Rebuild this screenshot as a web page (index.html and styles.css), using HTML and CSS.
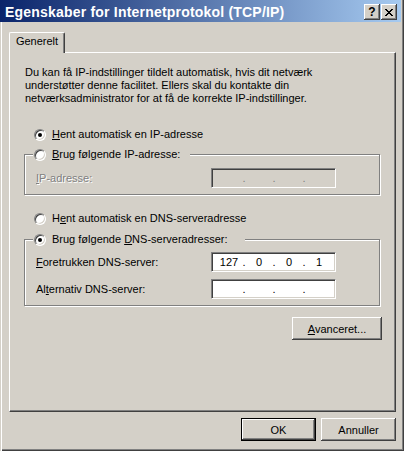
FILE: index.html
```html
<!DOCTYPE html>
<html lang="da">

<head>
    <meta charset="UTF-8">
    <title>Egenskaber for Internetprotokol (TCP/IP)</title>
    <link rel="stylesheet" href="styles.css">
</head>

<body>
    <div class="window">
        <div class="titlebar">
            <span class="title">Egenskaber for Internetprotokol (TCP/IP)</span>
            <div class="caption-buttons">
                <button class="cap-btn cap-help">?</button>
                <button class="cap-btn cap-close">
                    <svg width="8" height="7" viewBox="0 0 8 7">
                        <path d="M0 0h2v1h-2zM6 0h2v1h-2zM1 1h2v1h-2zM5 1h2v1h-2zM2 2h4v1h-4zM3 3h2v1h-2zM2 4h4v1h-4zM1 5h2v1h-2zM5 5h2v1h-2zM0 6h2v1h-2zM6 6h2v1h-2z" fill="#000" />
                    </svg>
                </button>
            </div>
        </div>

        <div class="body">
            <div class="tabs">
                <div class="tab">Generelt</div>
            </div>

            <div class="panel">
                <p class="intro">Du kan få IP-indstillinger tildelt automatisk, hvis dit netværk
                    understøtter denne facilitet. Ellers skal du kontakte din
                    netværksadministrator for at få de korrekte IP-indstillinger.</p>

                <div class="radio-row row-ip-auto">
                    <span class="radio checked"></span>
                    <span><u>H</u>ent automatisk en IP-adresse</span>
                </div>

                <fieldset class="group group-ip">
                    <legend class="group-caption caption-ip">
                        <span class="radio"></span>
                        <span><u>B</u>rug følgende IP-adresse:</span>
                    </legend>
                    <div class="field-row">
                        <span class="label disabled"><u>I</u>P-adresse:</span>
                        <div class="ipfield ipfield-disabled">
                            <span class="seg"></span><span class="dot">.</span>
                            <span class="seg"></span><span class="dot">.</span>
                            <span class="seg"></span><span class="dot">.</span>
                            <span class="seg"></span>
                        </div>
                    </div>
                </fieldset>

                <div class="radio-row row-dns-auto">
                    <span class="radio"></span>
                    <span>H<u>e</u>nt automatisk en DNS-serveradresse</span>
                </div>

                <fieldset class="group group-dns">
                    <legend class="group-caption caption-dns">
                        <span class="radio checked"></span>
                        <span>Brug følgende <u>D</u>NS-serveradresser:</span>
                    </legend>
                    <div class="field-row">
                        <span class="label"><u>F</u>oretrukken DNS-server:</span>
                        <div class="ipfield">
                            <span class="seg">127</span><span class="dot">.</span>
                            <span class="seg">0</span><span class="dot">.</span>
                            <span class="seg">0</span><span class="dot">.</span>
                            <span class="seg">1</span>
                        </div>
                    </div>
                    <div class="field-row">
                        <span class="label">Al<u>t</u>ernativ DNS-server:</span>
                        <div class="ipfield">
                            <span class="seg"></span><span class="dot">.</span>
                            <span class="seg"></span><span class="dot">.</span>
                            <span class="seg"></span><span class="dot">.</span>
                            <span class="seg"></span>
                        </div>
                    </div>
                </fieldset>

                <div class="advanced-row">
                    <button class="btn btn-advanced"><u>A</u>vanceret...</button>
                </div>
            </div>

            <div class="actions">
                <button class="btn btn-default">OK</button>
                <button class="btn">Annuller</button>
            </div>
        </div>
    </div>
</body>

</html>
```

FILE: styles.css
```css
* {
    margin: 0;
    padding: 0;
    box-sizing: border-box;
}

body {
    font-family: 'Liberation Sans', Arial, sans-serif;
    font-size: 11px;
    color: #000;
    background: #D4D0C8;
}

u {
    text-decoration: underline;
    text-underline-offset: 1px;
}

.window {
    width: 404px;
    height: 451px;
    background-color: #D4D0C8;
    box-shadow: inset 1px 0 #D4D0C8, inset 2px 0 #FFFFFF, inset -1px -1px #404040, inset -2px -2px #808080;
}

/* title bar */

.titlebar {
    height: 22px;
    margin-right: 3px;
    background: linear-gradient(to right, #0A246A, #A6CAF0);
    display: flex;
    align-items: center;
    justify-content: space-between;
}

.title {
    color: #FFFFFF;
    font-weight: bold;
    font-size: 14px;
    letter-spacing: 0.2px;
    line-height: 16px;
    padding-left: 5px;
    margin-top: 2px;
    white-space: nowrap;
}

.caption-buttons {
    display: flex;
    gap: 1px;
    margin-right: 4px;
    margin-top: 2px;
}

.cap-btn {
    width: 16px;
    height: 16px;
    border: none;
    background-color: #D4D0C8;
    box-shadow: inset -1px -1px #404040, inset 1px 1px #FFFFFF, inset -2px -2px #808080;
    display: flex;
    align-items: center;
    justify-content: center;
    font-family: 'Liberation Sans', Arial, sans-serif;
}

.cap-help {
    font-weight: bold;
    font-size: 12px;
    line-height: 12px;
    padding-bottom: 1px;
}

.cap-close svg {
    display: block;
}

/* tabs and panel */

.body {
    padding: 10px 0 0 9px;
}

.tabs {
    display: flex;
}

.tab {
    position: relative;
    width: 56px;
    height: 21px;
    margin-bottom: -1px;
    background-color: #D4D0C8;
    border-top: 1px solid #FFFFFF;
    border-left: 1px solid #FFFFFF;
    border-right: 1px solid #404040;
    border-radius: 2px 2px 0 0;
    box-shadow: inset -1px 0 #808080;
    text-align: center;
    line-height: 17px;
}

.panel {
    width: 387px;
    height: 360px;
    border-top: 1px solid #FFFFFF;
    border-left: 1px solid #FFFFFF;
    border-right: 1px solid #404040;
    border-bottom: 1px solid #404040;
    box-shadow: inset -1px -1px #808080;
    padding: 13px 15px 0 14px;
}

.intro {
    width: 300px;
    line-height: 13px;
    padding-left: 1px;
}

/* radio buttons */

.radio-row,
.group-caption {
    display: flex;
    align-items: center;
    gap: 6px;
    height: 13px;
    line-height: 13px;
}

.radio-row {
    margin-left: 10px;
}

.row-ip-auto {
    margin-top: 23px;
}

.row-dns-auto {
    margin-top: 17px;
}

.radio {
    position: relative;
    width: 12px;
    height: 12px;
    flex-shrink: 0;
    border-radius: 50%;
    background-color: #FFFFFF;
    border: 1px solid;
    border-color: #808080 #FFFFFF #FFFFFF #808080;
    box-shadow: inset 1px 1px #404040, inset -1px -1px #D4D0C8;
}

.radio.checked::after {
    content: '';
    position: absolute;
    left: 3px;
    top: 3px;
    width: 4px;
    height: 4px;
    border-radius: 50%;
    background-color: #000;
}

/* group boxes */

.group {
    border: 1px solid #808080;
    box-shadow: inset 1px 1px #FFFFFF, 1px 1px #FFFFFF;
    padding: 7px 0 6px 11px;
    display: flex;
    flex-direction: column;
    gap: 7px;
}

.group-ip {
    margin-top: 7px;
}

.group-dns {
    margin-top: 8px;
    padding-top: 6px;
}

.group-caption {
    margin-left: -3px;
    padding-left: 1px;
    background-color: #D4D0C8;
}

.caption-ip {
    width: 157px;
}

.caption-dns {
    width: 212px;
}

.field-row {
    display: grid;
    grid-template-columns: 175px 125px;
    align-items: center;
}

.label {
    white-space: nowrap;
}

.disabled {
    color: #808080;
    text-shadow: 1px 1px #FFFFFF;
}

.ipfield {
    height: 20px;
    display: flex;
    align-items: center;
    padding-left: 5px;
    background-color: #FFFFFF;
    border: 1px solid;
    border-color: #808080 #FFFFFF #FFFFFF #808080;
    box-shadow: inset 1px 1px #404040, inset -1px -1px #D4D0C8;
}

.ipfield-disabled {
    background-color: #D4D0C8;
    color: #808080;
}

.seg {
    width: 24px;
    text-align: center;
}

.dot {
    width: 6px;
    text-align: center;
}

/* push buttons */

.btn {
    height: 23px;
    width: 75px;
    border: none;
    background-color: #D4D0C8;
    font-family: 'Liberation Sans', Arial, sans-serif;
    font-size: 11px;
    color: #000;
    box-shadow: inset -1px -1px #404040, inset 1px 1px #FFFFFF, inset -2px -2px #808080;
}

.btn-default {
    border: 1px solid #000;
}

.advanced-row {
    display: flex;
    justify-content: flex-end;
    margin-top: 11px;
    margin-right: -2px;
}

.btn-advanced {
    width: 90px;
}

.actions {
    display: flex;
    justify-content: flex-end;
    gap: 5px;
    width: 387px;
    margin-top: 6px;
}
```
